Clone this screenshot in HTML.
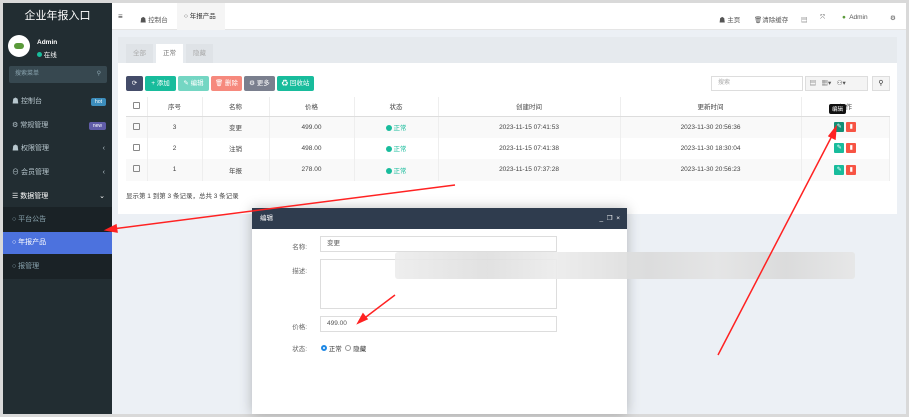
<!DOCTYPE html><html><head><meta charset="utf-8"><style>
*{margin:0;padding:0;box-sizing:border-box}
body{width:909px;height:417px;background:#d9d9d9;font-family:"Liberation Sans","Noto Sans CJK SC",sans-serif;font-size:7px;color:#333;position:relative;overflow:hidden}
.a{position:absolute}
.side{left:3px;top:3px;width:109px;height:411px;background:#222d32}
.mi{position:absolute;left:0;width:109px;height:24px;color:#b8c7ce;font-size:7px;line-height:24px;padding-left:9px}
.bd{position:absolute;right:6px;top:8px;height:8px;padding:0 4px;border-radius:2px;font-size:5px;line-height:8px;color:#fff}
.btn{position:absolute;top:76px;height:15px;border-radius:2px;color:#fff;font-size:6.5px;line-height:15px;text-align:center}
table{border-collapse:collapse;position:absolute;left:126px;top:97px;width:764px;font-size:6.5px;color:#444}
td,th{text-align:center;border-right:1px solid #eee;font-weight:normal}
th{height:19px;border-bottom:1px solid #ddd}
td{height:21.5px}
tr.o td{background:#f9f9f9}
.cb{display:inline-block;width:7px;height:7px;border:1px solid #888;border-radius:1px}
.ok{color:#18bc9c}.ok:before{content:"";display:inline-block;width:6px;height:6px;border-radius:50%;background:#18bc9c;margin-right:2px;vertical-align:-1px}
.ib{display:inline-block;width:10px;height:10px;border-radius:1px;margin:0 1px;vertical-align:middle;color:#fff;font-size:6px;line-height:10px}
.inp{position:absolute;left:320px;width:237px;border:1px solid #ddd;background:#fff;font-size:6.5px;padding-left:6px;color:#555}
.lb{position:absolute;left:270px;width:37px;text-align:right;font-size:6.5px;color:#666}
.hd{position:absolute;top:14px;font-size:6.5px;color:#555}
</style></head><body>
<div class="a" style="left:3px;top:3px;width:903px;height:411px;background:#ecf0f5"></div>
<div class="a side">
<div class="a" style="left:0;top:0;width:109px;height:27px;color:#fff;font-size:11px;line-height:27px;text-align:center">企业年报入口</div>
<div class="a" style="left:5px;top:32px;width:22px;height:22px;border-radius:50%;background:#fff"><div class="a" style="left:6px;top:8px;width:10px;height:6px;background:#5a9a3a;border-radius:3px"></div></div>
<div class="a" style="left:34px;top:36px;color:#fff;font-size:6.5px;font-weight:bold">Admin</div>
<div class="a" style="left:34px;top:46px;color:#fff;font-size:6.5px"><span style="display:inline-block;width:5px;height:5px;border-radius:50%;background:#18bc9c"></span> 在线</div>
<div class="a" style="left:6px;top:63px;width:98px;height:17px;background:#374850;border-radius:2px;color:#8aa4af;font-size:6px;line-height:17px;padding-left:6px">搜索菜单<span style="position:absolute;right:6px">⚲</span></div>
<div class="mi" style="top:87px">☗ 控制台<span class="bd" style="background:#3c8dbc">hot</span></div>
<div class="mi" style="top:111px">⚙ 常规管理<span class="bd" style="background:#605ca8">new</span></div>
<div class="mi" style="top:134px">☗ 权限管理<span style="position:absolute;right:7px">‹</span></div>
<div class="mi" style="top:158px">⊖ 会员管理<span style="position:absolute;right:7px">‹</span></div>
<div class="mi" style="top:182px;color:#fff">☰ 数据管理<span style="position:absolute;right:7px">⌄</span></div>
<div class="a" style="left:0;top:204px;width:109px;height:72px;background:#1a2226"></div>
<div class="mi" style="top:205px;color:#8aa4af">○ 平台公告</div>
<div class="mi" style="top:229px;height:22px;line-height:22px;background:#4c72de;color:#fff">○ 年报产品</div>
<div class="mi" style="top:252px;color:#8aa4af">○ 报管理</div>
</div>
<div class="a" style="left:112px;top:3px;width:794px;height:27px;background:#fff;border-bottom:1px solid #e5e5e5"></div>
<div class="a" style="left:118px;top:12px;font-size:8px">≡</div>
<div class="a" style="left:140px;top:14px;font-size:6.5px;color:#555">☗ 控制台</div>
<div class="a" style="left:177px;top:3px;width:48px;height:27px;background:#f5f5f5;font-size:6.5px;line-height:27px;padding-left:7px">○ 年报产品</div>
<div class="hd" style="left:719px">☗ 主页</div>
<div class="hd" style="left:754px">🗑清除缓存</div>
<div class="hd" style="left:801px">▤</div>
<div class="hd" style="left:820px">⤧</div>
<div class="hd" style="left:842px"><span style="color:#5a9a3a">●</span>&nbsp; Admin</div>
<div class="hd" style="left:890px">⚙</div>
<div class="a" style="left:118px;top:37px;width:779px;height:26px;background:#e6eaee"></div>
<div class="a" style="left:126px;top:44px;width:27px;height:19px;background:#dfe3e7;color:#aaa;font-size:6.5px;text-align:center;line-height:19px">全部</div>
<div class="a" style="left:156px;top:44px;width:27px;height:19px;background:#fff;color:#777;font-size:6.5px;text-align:center;line-height:19px">正常</div>
<div class="a" style="left:186px;top:44px;width:27px;height:19px;background:#dfe3e7;color:#aaa;font-size:6.5px;text-align:center;line-height:19px">隐藏</div>
<div class="a" style="left:118px;top:63px;width:779px;height:151px;background:#fff"></div>
<div class="btn" style="left:126px;width:17px;background:#444c69">⟳</div>
<div class="btn" style="left:145px;width:31px;background:#18bc9c">+ 添加</div>
<div class="btn" style="left:178px;width:31px;background:#74d6c3">✎ 编辑</div>
<div class="btn" style="left:211px;width:31px;background:#f6897d">🗑 删除</div>
<div class="btn" style="left:244px;width:31px;background:#7a7f8e">⚙ 更多</div>
<div class="btn" style="left:277px;width:37px;background:#18bc9c">♻ 回收站</div>
<div class="a" style="left:711px;top:76px;width:92px;height:15px;border:1px solid #ddd;font-size:6px;color:#aaa;line-height:13px;padding-left:6px">搜索</div>
<div class="a" style="left:805px;top:76px;width:63px;height:15px;background:#f4f4f4;border:1px solid #ddd;font-size:6.5px;line-height:13px;color:#555">&nbsp;&nbsp;▤ &nbsp;&nbsp;▦▾ &nbsp;&nbsp;⚇▾</div>
<div class="a" style="left:872px;top:76px;width:18px;height:15px;background:#f4f4f4;border:1px solid #ddd;font-size:7px;line-height:13px;text-align:center">⚲</div>
<table>
<tr><th style="width:21px"><span class="cb"></span></th><th style="width:55px">序号</th><th style="width:67px">名称</th><th style="width:85px">价格</th><th style="width:84px">状态</th><th style="width:182px">创建时间</th><th style="width:181px">更新时间</th><th style="border-right:0">操作</th></tr>
<tr class="o"><td><span class="cb"></span></td><td>3</td><td>变更</td><td>499.00</td><td><span class="ok">正常</span></td><td>2023-11-15 07:41:53</td><td>2023-11-30 20:56:36</td><td><span class="ib" style="background:#128e75">✎</span><span class="ib" style="background:#f75444">▮</span></td></tr>
<tr><td><span class="cb"></span></td><td>2</td><td>注销</td><td>498.00</td><td><span class="ok">正常</span></td><td>2023-11-15 07:41:38</td><td>2023-11-30 18:30:04</td><td><span class="ib" style="background:#18bc9c">✎</span><span class="ib" style="background:#f75444">▮</span></td></tr>
<tr class="o"><td><span class="cb"></span></td><td>1</td><td>年报</td><td>278.00</td><td><span class="ok">正常</span></td><td>2023-11-15 07:37:28</td><td>2023-11-30 20:56:23</td><td><span class="ib" style="background:#18bc9c">✎</span><span class="ib" style="background:#f75444">▮</span></td></tr>
</table>
<div class="a" style="left:829px;top:104px;background:#111;color:#fff;font-size:5.5px;padding:1px 3px;border-radius:2px">编辑</div>
<div class="a" style="left:126px;top:190px;font-size:6.5px;color:#444">显示第 1 到第 3 条记录，总共 3 条记录</div>
<div class="a" style="left:252px;top:208px;width:375px;height:206px;background:#fff;box-shadow:0 0 12px rgba(0,0,0,.25)"></div>
<div class="a" style="left:252px;top:208px;width:375px;height:21px;background:#2f3c4e;color:#fff;font-size:6.5px;line-height:21px;padding-left:8px">编辑<span style="position:absolute;right:7px">_ &nbsp;❐ &nbsp;×</span></div>
<div class="lb" style="top:241px">名称:</div><div class="inp" style="top:236px;height:16px;line-height:14px">变更</div>
<div class="lb" style="top:265px">描述:</div><div class="inp" style="top:259px;height:50px"></div>
<div class="lb" style="top:321px">价格:</div><div class="inp" style="top:316px;height:16px;line-height:14px">499.00</div>
<div class="lb" style="top:343px">状态:</div>
<div class="a" style="left:321px;top:343px;font-size:6.5px"><span style="display:inline-block;width:6px;height:6px;border-radius:50%;border:2px solid #1e88e5"></span> 正常 &nbsp;<span style="display:inline-block;width:6px;height:6px;border-radius:50%;border:1px solid #999"></span> 隐藏</div>
<div class="a" style="left:395px;top:252px;width:460px;height:27px;background:linear-gradient(90deg,#ececec,#dedede 20%,#ebebeb 35%,#dadada 55%,#e4e4e4 70%,#d9d9d9 85%,#e6e6e6);border-radius:3px;opacity:.9"></div>
<svg class="a" style="left:0;top:0" width="909" height="417"><g stroke="#f22" stroke-width="1.5" fill="#f22">
<line x1="455" y1="185" x2="112" y2="229"/><polygon points="106,230 116,225 117,232"/>
<line x1="718" y1="355" x2="834" y2="132"/><polygon points="836,127 835,139 829,136"/>
<line x1="395" y1="295" x2="362" y2="320"/><polygon points="358,323 363,314 367,319"/>
</g></svg>
</body></html>
